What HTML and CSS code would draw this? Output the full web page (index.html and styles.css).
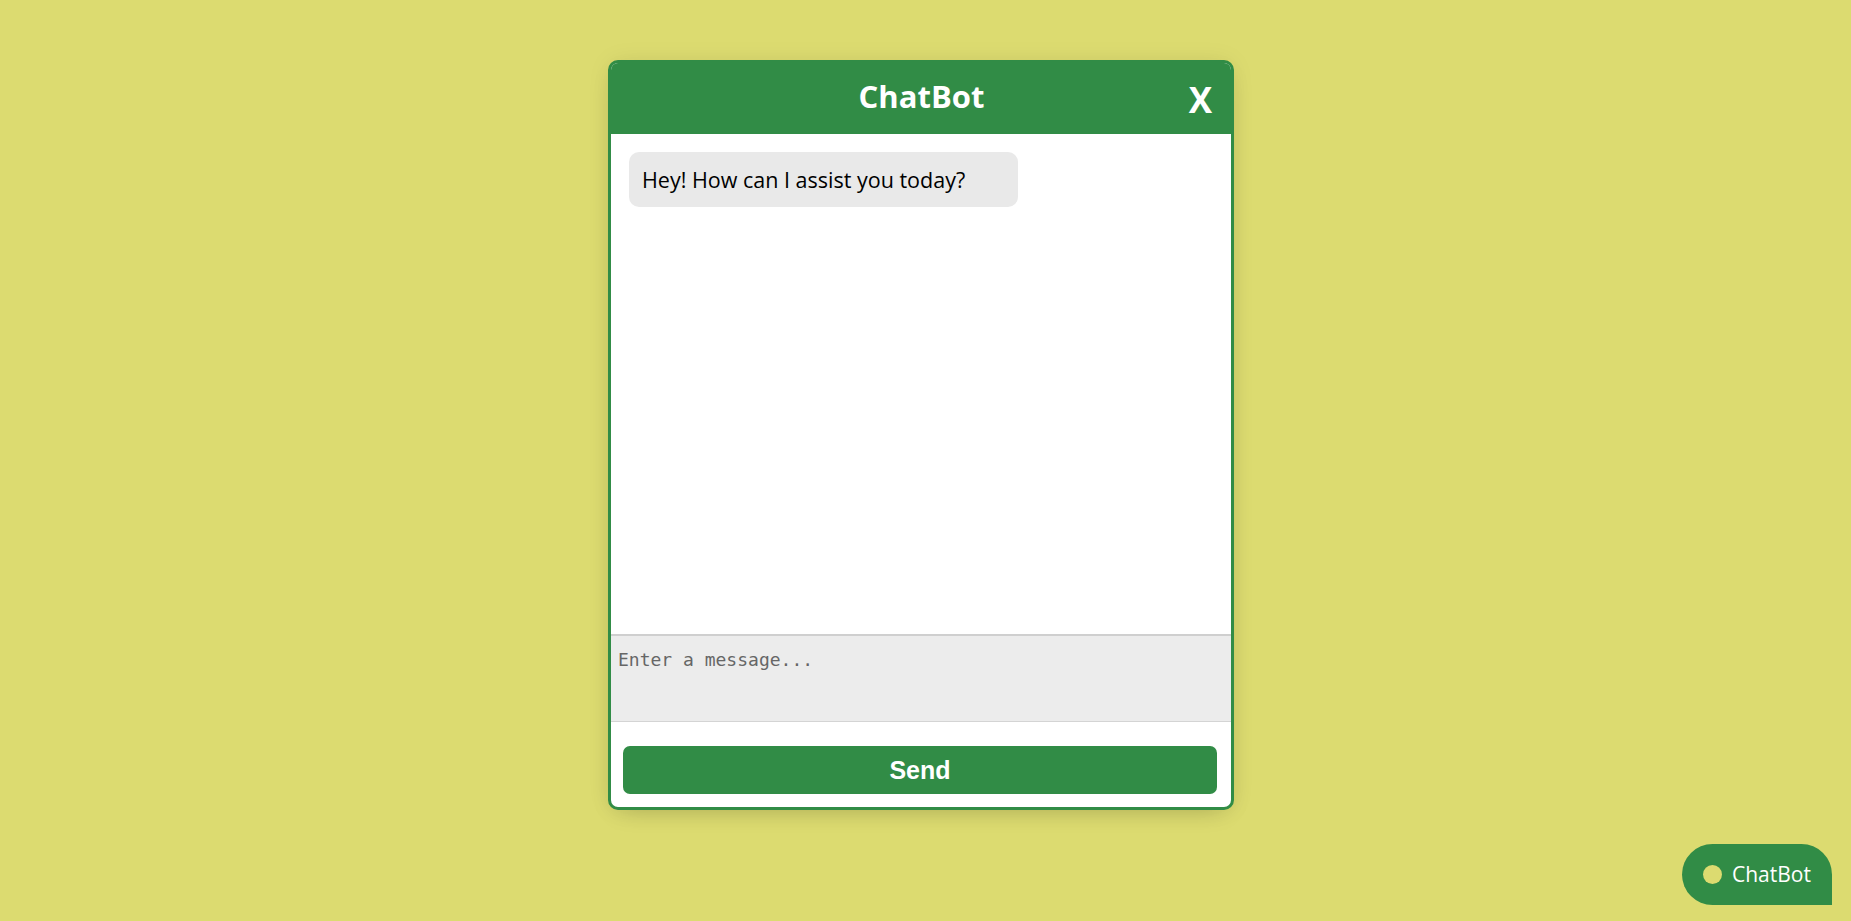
FILE: index.html
```html
<!DOCTYPE html>
<html lang="en">
<head>
<meta charset="utf-8">
<title>ChatBot</title>
<link rel="stylesheet" href="styles.css">
</head>
<body>
<div class="page">
  <div class="chatbot">
    <header class="chat-header">
      <span class="spacer"></span>
      <h2 class="title">ChatBot</h2>
      <span class="close">X</span>
    </header>
    <ul class="chatbox">
      <li class="chat incoming"><p>Hey! How can I assist you today?</p></li>
    </ul>
    <div class="chat-input">
      <textarea placeholder="Enter a message..."></textarea>
    </div>
    <div class="send-row">
      <button class="send-btn">Send</button>
    </div>
  </div>
</div>
<button class="toggler"><span class="dot"></span><span class="toggler-label">ChatBot</span></button>
</body>
</html>
```

FILE: styles.css
```css
* { box-sizing: border-box; }
html, body { margin: 0; padding: 0; }
body {
  background: #dcdb70;
  font-family: "Open Sans", "Noto Sans", sans-serif;
  height: 921px;
  overflow: hidden;
}
.page {
  padding: 60px 0 0 608px;
}
.chatbot {
  width: 626px;
  height: 750px;
  border: 3px solid #318c46;
  border-radius: 10px;
  background: #fff;
  overflow: hidden;
  display: flex;
  flex-direction: column;
  box-shadow: 0 0 24px rgba(0, 0, 0, 0.06), 0 8px 24px -12px rgba(0, 0, 0, 0.25);
}
.chat-header {
  height: 71px;
  flex: none;
  background: #318c46;
  display: grid;
  grid-template-columns: 1fr auto 1fr;
  align-items: center;
  padding: 0 19px 0 20px;
  color: #fff;
}
.title {
  margin: 0;
  font-size: 31px;
  font-weight: 700;
  line-height: 1;
  padding-bottom: 5px;
}
.close {
  justify-self: end;
  font-size: 35px;
  font-weight: 700;
  line-height: 1;
  padding-top: 1px;
}
.chatbox {
  list-style: none;
  margin: 0;
  height: 500px;
  flex: none;
  padding: 18px 18px;
}
.chat p {
  margin: 0;
  width: 389px;
  background: #e9e9e9;
  border-radius: 10px;
  padding: 13px 13px 12px;
  font-size: 21.5px;
  line-height: 30px;
  color: #000;
}
.chat-input {
  height: 88px;
  flex: none;
  border-top: 2px solid #cfcfcf;
  border-bottom: 1px solid #d4d4d4;
  background: #ececec;
}
.chat-input textarea {
  display: block;
  width: 100%;
  height: 100%;
  border: 0;
  outline: none;
  resize: none;
  background: transparent;
  padding: 13px 7px;
  font-family: "DejaVu Sans Mono", monospace;
  font-size: 18px;
  color: #333;
}
.chat-input textarea::placeholder {
  color: #666;
}
.send-row {
  flex: 1;
  padding: 24px 14px 0 12px;
}
.send-btn {
  display: block;
  width: 100%;
  height: 48px;
  border: 0;
  border-radius: 7px;
  background: #318c46;
  color: #fff;
  font-family: "Liberation Sans", Arial, sans-serif;
  font-weight: 700;
  font-size: 25px;
}
.toggler {
  position: fixed;
  right: 19px;
  bottom: 16px;
  width: 150px;
  height: 61px;
  border: 0;
  border-radius: 31px 31px 0 31px;
  background: #318c46;
  display: flex;
  align-items: center;
  gap: 10px;
  padding: 0 0 0 21px;
  color: #fff;
  font-family: "Open Sans", "Noto Sans", sans-serif;
}
.dot {
  width: 19px;
  height: 19px;
  border-radius: 50%;
  background: #dcdb70;
  flex: none;
}
.toggler-label {
  font-size: 21px;
  line-height: 1;
}
```
